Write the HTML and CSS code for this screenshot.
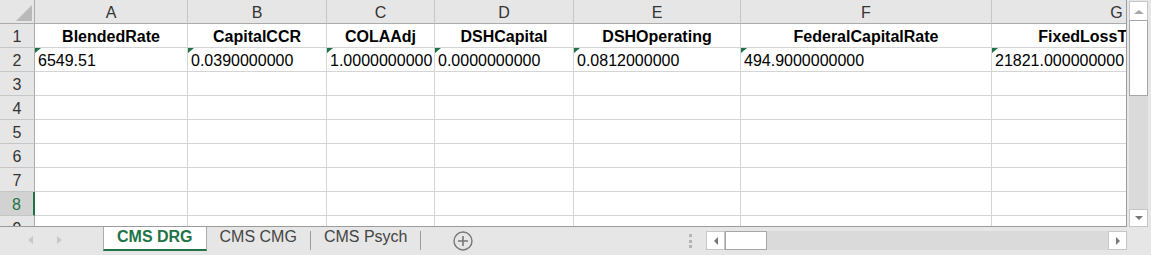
FILE: index.html
```html
<!DOCTYPE html>
<html lang="en">
<head>
    <meta charset="UTF-8">
    <meta name="viewport" content="width=device-width, initial-scale=1.0">
    <title>CMS DRG</title>
    <link rel="stylesheet" href="styles.css">
</head>
<body>

<div class="excel">
    <div class="sheet">
        <!-- column letters -->
        <div class="row">
            <div class="cell corner"></div>
            <div class="cell ch col-a">A</div>
            <div class="cell ch col-b">B</div>
            <div class="cell ch col-c">C</div>
            <div class="cell ch col-d">D</div>
            <div class="cell ch col-e">E</div>
            <div class="cell ch col-f">F</div>
            <div class="cell ch col-g">G</div>
        </div>

        <div class="row">
            <div class="cell rh">1</div>
            <div class="cell hdr col-a">BlendedRate</div>
            <div class="cell hdr col-b">CapitalCCR</div>
            <div class="cell hdr col-c">COLAAdj</div>
            <div class="cell hdr col-d">DSHCapital</div>
            <div class="cell hdr col-e">DSHOperating</div>
            <div class="cell hdr col-f">FederalCapitalRate</div>
            <div class="cell hdr col-g">FixedLossThreshold</div>
        </div>

        <div class="row">
            <div class="cell rh">2</div>
            <div class="cell flag col-a">6549.51</div>
            <div class="cell flag col-b">0.0390000000</div>
            <div class="cell flag col-c">1.0000000000</div>
            <div class="cell flag col-d">0.0000000000</div>
            <div class="cell flag col-e">0.0812000000</div>
            <div class="cell flag col-f">494.9000000000</div>
            <div class="cell flag col-g">21821.000000000</div>
        </div>

        <div class="row">
            <div class="cell rh">3</div>
            <div class="cell col-a"></div><div class="cell col-b"></div><div class="cell col-c"></div><div class="cell col-d"></div><div class="cell col-e"></div><div class="cell col-f"></div><div class="cell col-g"></div>
        </div>
        <div class="row">
            <div class="cell rh">4</div>
            <div class="cell col-a"></div><div class="cell col-b"></div><div class="cell col-c"></div><div class="cell col-d"></div><div class="cell col-e"></div><div class="cell col-f"></div><div class="cell col-g"></div>
        </div>
        <div class="row">
            <div class="cell rh">5</div>
            <div class="cell col-a"></div><div class="cell col-b"></div><div class="cell col-c"></div><div class="cell col-d"></div><div class="cell col-e"></div><div class="cell col-f"></div><div class="cell col-g"></div>
        </div>
        <div class="row">
            <div class="cell rh">6</div>
            <div class="cell col-a"></div><div class="cell col-b"></div><div class="cell col-c"></div><div class="cell col-d"></div><div class="cell col-e"></div><div class="cell col-f"></div><div class="cell col-g"></div>
        </div>
        <div class="row">
            <div class="cell rh">7</div>
            <div class="cell col-a"></div><div class="cell col-b"></div><div class="cell col-c"></div><div class="cell col-d"></div><div class="cell col-e"></div><div class="cell col-f"></div><div class="cell col-g"></div>
        </div>
        <div class="row">
            <div class="cell rh sel">8</div>
            <div class="cell col-a"></div><div class="cell col-b"></div><div class="cell col-c"></div><div class="cell col-d"></div><div class="cell col-e"></div><div class="cell col-f"></div><div class="cell col-g"></div>
        </div>
        <div class="row">
            <div class="cell rh">9</div>
            <div class="cell col-a"></div><div class="cell col-b"></div><div class="cell col-c"></div><div class="cell col-d"></div><div class="cell col-e"></div><div class="cell col-f"></div><div class="cell col-g"></div>
        </div>
    </div>

    <!-- vertical scrollbar -->
    <div class="vbar">
        <div class="vbtn"><span class="arr-up"></span></div>
        <div class="vthumb"></div>
        <div class="vtrack"></div>
        <div class="vbtn vbtn-down"><span class="arr-down"></span></div>
    </div>

    <!-- sheet tabs + horizontal scrollbar -->
    <div class="tabbar">
        <div class="nav">
            <span class="nav-left"></span>
            <span class="nav-right"></span>
        </div>
        <div class="tab active">CMS DRG</div>
        <div class="tab">CMS CMG</div>
        <div class="sep"></div>
        <div class="tab">CMS Psych</div>
        <div class="sep"></div>
        <svg class="add" width="20" height="20" viewBox="0 0 20 20">
            <circle cx="10" cy="10" r="9" fill="none" stroke="#777" stroke-width="1.4"/>
            <path d="M10 5v10M5 10h10" stroke="#777" stroke-width="1.6"/>
        </svg>

        <div class="grip">
            <span></span><span></span><span></span>
        </div>

        <div class="hscroll">
            <div class="hbtn"><span class="arr-left"></span></div>
            <div class="hthumb"></div>
            <div class="htrack"></div>
            <div class="hbtn"><span class="arr-right"></span></div>
        </div>
    </div>
    <div class="corner-br"></div>
</div>

</body>
</html>
```

FILE: styles.css
```css
* {
    box-sizing: border-box;
}

body {
    margin: 0;
    background-color: #e6e6e6;
    font-family: "Liberation Sans", Arial, sans-serif;
}

.excel {
    display: grid;
    grid-template-columns: 1127px 24px;
    grid-template-rows: 227px 28px;
    width: 1151px;
    height: 255px;
    overflow: hidden;
}

/* grid */
.sheet {
    background-color: #fff;
    border-right: 1px solid #9b9b9b;
    border-bottom: 1px solid #9b9b9b;
    overflow: hidden;
}

.row {
    display: flex;
    height: 24px;
}

.cell {
    flex: none;
    height: 24px;
    padding: 1px 3px 0;
    border-right: 1px solid #d4d4d4;
    border-bottom: 1px solid #d4d4d4;
    font-size: 16px;
    line-height: 23px;
    color: #000;
    white-space: nowrap;
    overflow: hidden;
}

.col-a { width: 153px; }
.col-b { width: 139px; }
.col-c { width: 108px; }
.col-d { width: 139px; }
.col-e { width: 167px; }
.col-f { width: 251px; }
.col-g { width: 250px; }

.corner {
    position: relative;
    width: 35px;
    background-color: #e6e6e6;
    border-right-color: #ababab;
    border-bottom-color: #ababab;
}

.corner::after {
    content: "";
    position: absolute;
    right: 2px;
    bottom: 2px;
    border-bottom: 16px solid #b9b9b9;
    border-left: 16px solid transparent;
}

.ch {
    background-color: #e6e6e6;
    border-right-color: #c6c6c6;
    border-bottom-color: #ababab;
    text-align: center;
    color: #333;
}

.rh {
    width: 35px;
    padding: 1px 0 0;
    background-color: #e6e6e6;
    border-right-color: #ababab;
    border-bottom-color: #c6c6c6;
    text-align: center;
    color: #333;
}

.rh.sel {
    background-color: #d2d2d2;
    color: #217346;
    border-right: 2px solid #217346;
}

.hdr {
    font-weight: bold;
    text-align: center;
}

/* number stored as text */
.flag {
    position: relative;
}

.flag::before {
    content: "";
    position: absolute;
    left: 0;
    top: 0;
    border-top: 5px solid #1e7145;
    border-right: 6px solid transparent;
}

/* vertical scrollbar */
.vbar {
    display: flex;
    flex-direction: column;
    padding: 1px 3px 0 2px;
}

.vbtn {
    flex: none;
    height: 20px;
    background-color: #fff;
    border: 1px solid #c6c6c6;
    display: flex;
    align-items: center;
    justify-content: center;
}

.vbtn-down {
    height: 18px;
}

.vthumb {
    flex: none;
    height: 76px;
    margin-top: -1px;
    background-color: #fff;
    border: 1px solid #a6a6a6;
}

.vtrack {
    flex: 1;
    background-color: #dadada;
}

.arr-up {
    margin-top: 1px;
    border-left: 5px solid transparent;
    border-right: 5px solid transparent;
    border-bottom: 4px solid #a6a6a6;
}

.arr-down {
    border-left: 4px solid transparent;
    border-right: 4px solid transparent;
    border-top: 4px solid #777;
}

/* tabs */
.tabbar {
    display: flex;
    align-items: flex-start;
    background-color: #e6e6e6;
}

.nav {
    flex: none;
    width: 103px;
    display: flex;
    gap: 24px;
    padding: 9px 0 0 28px;
}

.nav-left {
    border-top: 4px solid transparent;
    border-bottom: 4px solid transparent;
    border-right: 5px solid #c8c8c8;
}

.nav-right {
    border-top: 4px solid transparent;
    border-bottom: 4px solid transparent;
    border-left: 5px solid #c8c8c8;
}

.tab {
    flex: none;
    height: 24px;
    padding: 0 13px;
    font-size: 16px;
    line-height: 20px;
    color: #444;
    white-space: nowrap;
}

.tab.active {
    background-color: #fff;
    border-left: 1px solid #ababab;
    border-right: 1px solid #ababab;
    border-bottom: 2px solid #217346;
    color: #217346;
    font-weight: bold;
}

.sep {
    flex: none;
    width: 1px;
    height: 19px;
    margin-top: 4px;
    background-color: #9b9b9b;
}

.add {
    flex: none;
    margin: 4px 0 0 32px;
}

.grip {
    margin: 7px 14px 0 auto;
    display: flex;
    flex-direction: column;
    gap: 2.5px;
}

.grip span {
    width: 3px;
    height: 3px;
    background-color: #b4b4b4;
}

/* horizontal scrollbar */
.hscroll {
    flex: none;
    width: 421px;
    height: 19px;
    margin-top: 4px;
    display: flex;
    background-color: #dadada;
}

.hbtn {
    flex: none;
    width: 19px;
    background-color: #fff;
    border: 1px solid #c6c6c6;
    display: flex;
    align-items: center;
    justify-content: center;
}

.hthumb {
    flex: none;
    width: 42px;
    background-color: #fff;
    border: 1px solid #a6a6a6;
}

.htrack {
    flex: 1;
}

.arr-left {
    border-top: 4px solid transparent;
    border-bottom: 4px solid transparent;
    border-right: 4px solid #777;
}

.arr-right {
    border-top: 4px solid transparent;
    border-bottom: 4px solid transparent;
    border-left: 4px solid #777;
}

.corner-br {
    background-color: #e6e6e6;
}
```
